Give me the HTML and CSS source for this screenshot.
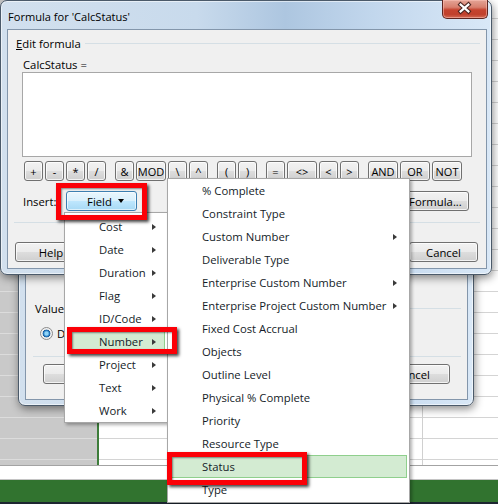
FILE: index.html
```html
<!DOCTYPE html>
<html>
<head>
<meta charset="utf-8">
<title>Formula for 'CalcStatus'</title>
<link rel="stylesheet" href="styles.css">
</head>
<body>
<div class="screen">
  <div class="app">
    <div class="grid">
      <div class="pane-left"></div>
      <div class="pane-divider"></div>
      <div class="pane-right"></div>
    </div>
    <div class="footer-strip"></div>
    <div class="statusbar"></div>
  </div>

  <div class="dialog dialog-back">
    <div class="titlebar"></div>
    <div class="client back-client">
      <div class="label-rule back-label"><span>Values</span><span class="rule"></span></div>
      <div class="radio-row">
        <span class="radio checked"></span><span>Data</span>
      </div>
      <div class="hr back-hr"></div>
      <div class="button-row back-buttons">
        <span class="btn wbtn"></span>
        <span class="push"></span>
        <span class="btn wbtn"></span>
        <span class="btn wbtn">Cancel</span>
      </div>
    </div>
  </div>

  <div class="dialog dialog-main">
    <div class="titlebar">
      <span class="title">Formula for 'CalcStatus'</span>
      <span class="close">
        <svg width="46" height="19" viewBox="0 0 46 19">
          <path d="M19 5.5 L27 12.5 M27 5.5 L19 12.5" stroke="#4a2420" stroke-width="4.4" stroke-linecap="square" fill="none"/>
          <path d="M19 5.5 L27 12.5 M27 5.5 L19 12.5" stroke="#ffffff" stroke-width="2.2" stroke-linecap="square" fill="none"/>
        </svg>
      </span>
    </div>
    <div class="client main-client">
      <div class="label-rule main-label"><span><u>E</u>dit formula</span><span class="rule"></span></div>
      <div class="field-name">CalcStatus =</div>
      <div class="editor"></div>
      <div class="ops">
        <div class="op-group">
          <span class="btn op">+</span><span class="btn op">-</span><span class="btn op">*</span><span class="btn op">/</span>
        </div>
        <div class="op-group">
          <span class="btn op">&amp;</span><span class="btn op wide">MOD</span><span class="btn op">\</span><span class="btn op">^</span>
        </div>
        <div class="op-group">
          <span class="btn op">(</span><span class="btn op">)</span>
        </div>
        <div class="op-group">
          <span class="btn op">=</span><span class="btn op wide">&lt;&gt;</span><span class="btn op">&lt;</span><span class="btn op">&gt;</span>
        </div>
        <div class="op-group">
          <span class="btn op wide">AND</span><span class="btn op wide">OR</span><span class="btn op wide">NOT</span>
        </div>
      </div>
      <div class="insert-row">
        <span class="insert-label">Insert:</span>
        <span class="btn field-btn">Field <span class="caret"></span></span>
        <span class="push"></span>
        <span class="btn import-btn">Import Formula...</span>
      </div>
      <div class="hr main-hr"></div>
      <div class="button-row main-buttons">
        <span class="btn wbtn help-btn">Help</span>
        <span class="push"></span>
        <span class="btn wbtn"></span>
        <span class="btn wbtn">Cancel</span>
      </div>
    </div>
  </div>

  <div class="menu menu-field">
    <div class="item"><span class="label">Cost</span><span class="arrow"></span></div>
    <div class="item"><span class="label">Date</span><span class="arrow"></span></div>
    <div class="item"><span class="label">Duration</span><span class="arrow"></span></div>
    <div class="item"><span class="label">Flag</span><span class="arrow"></span></div>
    <div class="item"><span class="label">ID/Code</span><span class="arrow"></span></div>
    <div class="item hot"><span class="label">Number</span><span class="arrow"></span></div>
    <div class="item"><span class="label">Project</span><span class="arrow"></span></div>
    <div class="item"><span class="label">Text</span><span class="arrow"></span></div>
    <div class="item"><span class="label">Work</span><span class="arrow"></span></div>
  </div>

  <div class="menu menu-number">
    <div class="item"><span class="label">% Complete</span></div>
    <div class="item"><span class="label">Constraint Type</span></div>
    <div class="item"><span class="label">Custom Number</span><span class="arrow"></span></div>
    <div class="item"><span class="label">Deliverable Type</span></div>
    <div class="item"><span class="label">Enterprise Custom Number</span><span class="arrow"></span></div>
    <div class="item"><span class="label">Enterprise Project Custom Number</span><span class="arrow"></span></div>
    <div class="item"><span class="label">Fixed Cost Accrual</span></div>
    <div class="item"><span class="label">Objects</span></div>
    <div class="item"><span class="label">Outline Level</span></div>
    <div class="item"><span class="label">Physical % Complete</span></div>
    <div class="item"><span class="label">Priority</span></div>
    <div class="item"><span class="label">Resource Type</span></div>
    <div class="item hot"><span class="label">Status</span></div>
    <div class="item"><span class="label">Type</span></div>
  </div>

  <div class="callout callout-field"></div>
  <div class="callout callout-number"></div>
  <div class="callout callout-status"></div>
</div>
</body>
</html>
```
FILE: styles.css
```css
* { box-sizing: border-box; }
html, body { margin: 0; padding: 0; }
body {
  font-family: "Open Sans", "Noto Sans", sans-serif;
  font-size: 11.3px;
  color: #000;
  background: #fff;
}
.screen {
  position: relative;
  width: 498px;
  height: 504px;
  overflow: hidden;
}

/* background application */
.app { display: flex; flex-direction: column; height: 504px; }
.grid { display: flex; height: 466px; border-bottom: 1px solid #a3a3a3; }
.pane-left {
  width: 97px;
  background-color: #c9c9c9;
  background-image: repeating-linear-gradient(to bottom, transparent 0 20px, #dcdcdc 20px 21px);
  background-position: 0 -2px;
}
.pane-divider { width: 2px; background: #3d7d3a; }
.pane-right {
  flex: 1;
  background-color: #fff;
  background-image:
    linear-gradient(to right, transparent 0 323px, #d0d0d0 323px 324px, transparent 324px),
    repeating-linear-gradient(to bottom, transparent 0 20px, #d4d4d4 20px 21px);
  background-position: 0 0, 0 -2px;
}
.footer-strip { height: 14px; background: #fff; border-bottom: 1px solid #c4c4c4; }
.statusbar { flex: 1; background: #31732f; border-bottom: 2px solid #1d2631; }

/* dialogs */
.dialog {
  position: absolute;
  display: flex;
  flex-direction: column;
  border: 1px solid #4b5a6a;
  border-radius: 7px;
  background: linear-gradient(to right, #d2e0ee 0%, #c8daec 40%, #adc6e0 58%, #c2d7ed 76%, #d9e8f7 100%);
  box-shadow: 1px 3px 9px rgba(0, 0, 0, 0.45), inset 0 0 0 1px rgba(255, 255, 255, 0.55);
}
.dialog-main { left: 0; top: 0; width: 492px; height: 275px; z-index: 3; }
.dialog-back { left: 18px; top: 120px; width: 456px; height: 286px; z-index: 2; }

.titlebar {
  height: 28px;
  display: flex;
  align-items: flex-start;
  flex-shrink: 0;
}
.title {
  padding: 8px 0 0 7px;
  font-size: 11.1px;
  color: #000;
  flex: 1;
}
.close {
  width: 46px;
  height: 19px;
  margin: -1px 3px 0 0;
  border: 1px solid #5d2520;
  border-top: none;
  border-radius: 0 0 5px 5px;
  background: linear-gradient(to bottom, #e4a496 0%, #d8806f 40%, #c5432f 55%, #c0402c 80%, #d26a55 100%);
  box-shadow: inset 0 0 0 1px rgba(255, 200, 190, 0.5);
  display: flex;
}
.close svg { margin: -1px 0 0 -1px; }

.client {
  flex: 1;
  display: flex;
  flex-direction: column;
  background: #f0f0f0;
  border: 1px solid #8396ab;
}
.main-client { margin: 0 4px 5px 6px; }
.back-client { margin: 0 5px 5px 6px; justify-content: flex-end; padding-bottom: 15px; }

.label-rule { display: flex; align-items: center; height: 15px; line-height: 15px; }
.label-rule .rule { flex: 1; height: 1px; background: #d5dfe5; margin-left: 4px; }
.main-label { margin-top: 6px; padding-left: 8px; }
.main-label .rule { margin-right: 6px; }
.field-name { margin-top: 6px; padding-left: 15px; height: 15px; line-height: 15px; }
.editor {
  margin: 0 14px 0 14px;
  height: 85px;
  background: #fff;
  border: 1px solid #a7a7a7;
}

/* buttons */
.btn {
  display: inline-flex;
  align-items: center;
  justify-content: center;
  height: 20px;
  border: 1px solid #707070;
  border-radius: 3px;
  background: linear-gradient(to bottom, #f2f2f2 0%, #ebebeb 48%, #dddddd 52%, #cfcfcf 100%);
  box-shadow: inset 0 0 0 1px rgba(255, 255, 255, 0.75);
  color: #000;
  white-space: nowrap;
  flex-shrink: 0;
}
.ops { display: flex; margin-top: 4px; padding-left: 16px; height: 20px; gap: 9px; }
.op-group { display: flex; gap: 2px; }
.op { width: 19px; font-size: 11px; }
.op.wide { width: 30px; }

.insert-row { display: flex; align-items: center; margin-top: 10px; height: 20px; padding-left: 15px; padding-right: 17px; }
.insert-label { width: 43px; }
.field-btn {
  width: 71px;
  border-color: #3c7fb1;
  background: linear-gradient(to bottom, #eaf6fd 0%, #d9f0fc 48%, #bee6fd 52%, #a7d9f5 100%);
  box-shadow: inset 0 0 0 1px rgba(255, 255, 255, 0.6);
  padding-left: 8px;
}
.caret {
  display: inline-block;
  width: 0; height: 0;
  border-left: 3.5px solid transparent;
  border-right: 3.5px solid transparent;
  border-top: 4px solid #000;
  margin-left: 6px;
}
.push { flex: 1; }
.import-btn { width: 106px; }

.hr { height: 1px; background: #d5dfe5; }
.main-hr { margin: 11px 6px 0 6px; }
.button-row { display: flex; height: 20px; gap: 6px; }
.main-buttons { margin-top: 19px; padding: 0 8px 0 7px; }
.wbtn { width: 69px; }
.help-btn { width: 72px; }

/* back dialog content */
.back-label { padding-left: 9px; }
.back-label .rule { margin-right: 6px; }
.radio-row { display: flex; align-items: center; height: 16px; margin-top: 9px; padding-left: 14px; gap: 4px; }
.radio {
  width: 13px; height: 13px;
  border-radius: 50%;
  border: 1px solid #8a8a8a;
  background: radial-gradient(circle, #f8f8f8 0 3px, #dedede 6px);
  flex-shrink: 0;
}
.radio.checked {
  background: radial-gradient(circle, #8fd4f8 0 1.5px, #2479c0 3px, #1b5b98 3.6px, #eaeaea 4.2px, #f8f8f8 6px);
}
.back-hr { margin: 15px 6px 7px 7px; }
.back-buttons { padding: 0 17px 0 17px; }
.back-buttons .wbtn { width: 75px; }

/* menus */
.menu {
  position: absolute;
  background: #fff;
  border: 1px solid #a7a7a7;
  box-shadow: 2px 2px 3px rgba(0, 0, 0, 0.3);
  color: #141c28;
}
.menu-field { left: 64px; top: 212px; width: 104px; padding: 2px 0 0 0; z-index: 5; }
.menu-number { left: 167px; top: 178px; width: 243px; padding: 0 0 1px 0; z-index: 6; }
.item {
  display: flex;
  align-items: center;
  height: 23px;
  margin: 0 2px;
  border: 1px solid transparent;
  padding-left: 31px;
}
.item .label { flex: 1; white-space: nowrap; }
.item .arrow {
  width: 0; height: 0;
  border-top: 3.5px solid transparent;
  border-bottom: 3.5px solid transparent;
  border-left: 4px solid #3a3a3a;
  margin-right: 8px;
}
.menu-number .item .arrow { margin-right: 9px; }
.item.hot { background: #d3ebd2; border-color: #8fcf8d; }

/* highlight callouts */
.callout {
  position: absolute;
  border: 5px solid #fb0007;
  box-shadow: 2px 2px 3px rgba(0, 0, 0, 0.75), inset 1px 1px 2px rgba(0, 0, 0, 0.45);
  z-index: 10;
}
.callout-field { left: 56px; top: 183px; width: 91px; height: 37px; }
.callout-number { left: 67px; top: 327px; width: 110px; height: 27px; }
.callout-status { left: 167px; top: 452px; width: 140px; height: 33px; }
```
